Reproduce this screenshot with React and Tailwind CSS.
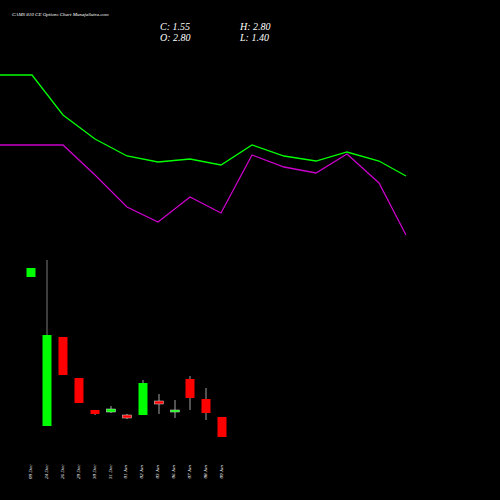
const green = '0,75 32,75 63,115 95,139 127,156 158,162 190,159 221,165 252,145 284,156 316,161 347,152 379,161 406,176'
const purple = '0,145 63,145 95,175 127,207 158,222 190,197 221,213 252,155 284,167 316,173 347,154 379,183 406,235'

const candles = [
  { x: 31, o: 268, c: 277, h: 268, l: 277, up: true },
  { x: 47, o: 335, c: 426, h: 260, l: 426, up: true },
  { x: 63, o: 337, c: 375, h: 337, l: 375, up: false },
  { x: 79, o: 378, c: 403, h: 378, l: 403, up: false },
  { x: 95, o: 410, c: 414, h: 410, l: 415, up: false },
  { x: 111, o: 409, c: 412, h: 406, l: 413, up: true },
  { x: 127, o: 415, c: 418, h: 414, l: 419, up: false },
  { x: 143, o: 383, c: 415, h: 380, l: 415, up: true },
  { x: 159, o: 401, c: 404, h: 394, l: 414, up: false },
  { x: 175, o: 410, c: 412, h: 400, l: 418, up: true },
  { x: 190, o: 379, c: 398, h: 376, l: 410, up: false },
  { x: 206, o: 399, c: 413, h: 388, l: 420, up: false },
  { x: 222, o: 417, c: 437, h: 417, l: 437, up: false },
]

const labels = ['09 Dec', '24 Dec', '26 Dec', '29 Dec', '30 Dec', '31 Dec', '01 Jan', '02 Jan', '03 Jan', '06 Jan', '07 Jan', '08 Jan', '09 Jan']

export default function App() {
  return (
    <div className="relative h-[500px] w-[500px] overflow-hidden bg-black" style={{ fontFamily: '"Liberation Serif", serif' }}>
      <div className="absolute left-[12px] top-[11px] text-[5px] italic text-white">CAMS 810 CE Options Chart MunafaSutra.com</div>
      <div className="absolute left-[160px] top-[21px] grid grid-cols-[80px_80px] text-[10px] italic leading-[11px] text-white">
        <span>C: 1.55</span><span>H: 2.80</span>
        <span>O: 2.80</span><span>L: 1.40</span>
      </div>
      <svg className="absolute left-0 top-0" width="500" height="500">
        <polyline points={green} fill="none" stroke="#00ff00" strokeWidth="1.3" />
        <polyline points={purple} fill="none" stroke="#cc00cc" strokeWidth="1.3" />
        {candles.map((k, i) => (
          <g key={i}>
            <line x1={k.x} x2={k.x} y1={k.h} y2={k.l} stroke={i === 1 ? '#999' : '#ccc'} strokeWidth="0.8" />
            <rect x={k.x - 4.5} y={k.o} width="9" height={Math.max(k.c - k.o, 1.5)} fill={k.up ? '#00ff00' : '#ff0000'} stroke={k.c - k.o < 4 ? '#ddd' : 'none'} strokeWidth="0.5" />
          </g>
        ))}
      </svg>
      {labels.map((t, i) => (
        <div key={t} className="absolute top-[470px] h-0 w-0" style={{ left: 31 + i * 15.9 }}>
          <span className="absolute -left-[12px] -top-[2px] block w-[24px] -rotate-90 text-center text-[5px] italic text-white">{t}</span>
        </div>
      ))}
    </div>
  )
}
